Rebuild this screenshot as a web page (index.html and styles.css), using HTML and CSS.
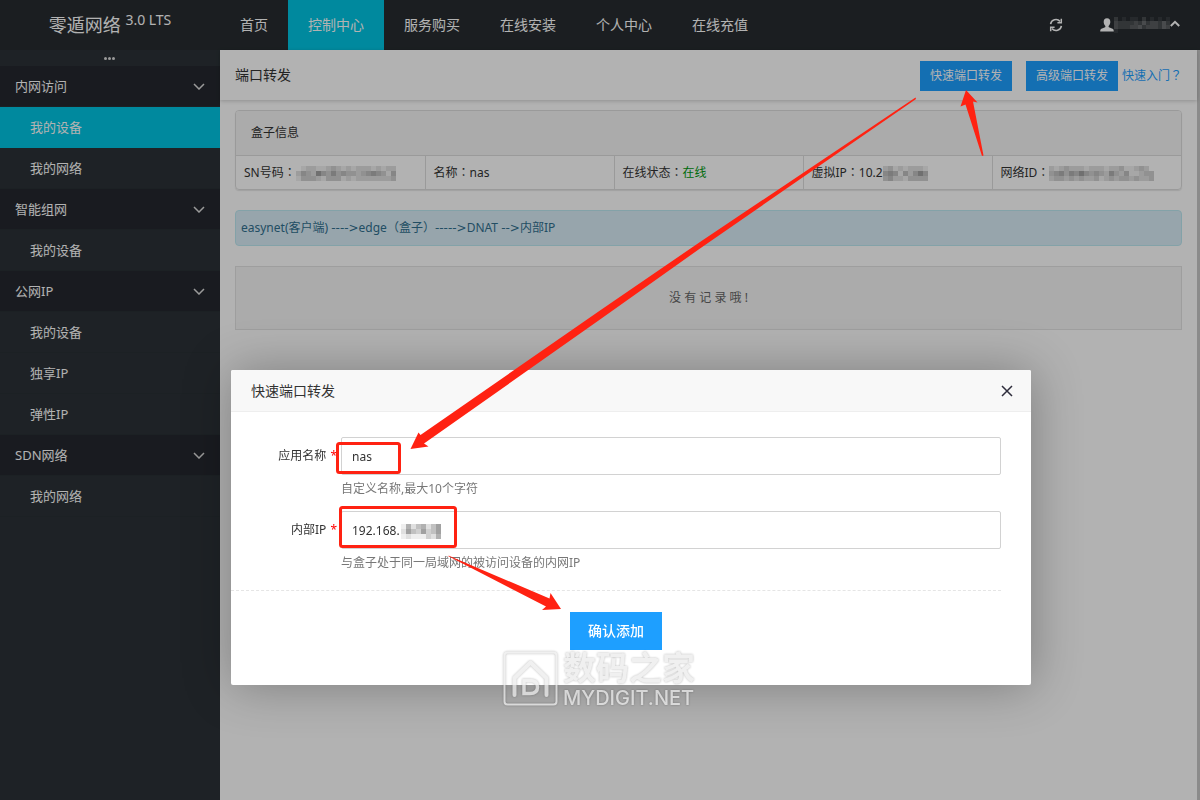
FILE: index.html
```html
<!DOCTYPE html>
<html lang="zh-CN">
<head>
<meta charset="utf-8">
<title>零遁网络</title>
<link rel="stylesheet" href="styles.css">
</head>
<body>
<div class="app">
  <header class="topbar">
    <div class="logo">零遁网络 <sup>3.0 LTS</sup></div>
    <nav class="nav">
      <a href="#">首页</a>
      <a href="#" class="active">控制中心</a>
      <a href="#">服务购买</a>
      <a href="#">在线安装</a>
      <a href="#">个人中心</a>
      <a href="#">在线充值</a>
    </nav>
    <div class="tools">
      <button class="icon-btn" aria-label="刷新">
        <svg width="14" height="14" viewBox="0 0 14 14" fill="none" stroke="currentColor" stroke-width="1.6"><path d="M1.6 6.2A5.4 5.4 0 0 1 11 3.4M12.4 7.8A5.4 5.4 0 0 1 3 10.6"/><path d="M12.3.8v4H8.4M1.7 13.2v-4h3.9" stroke-width="1.5"/></svg>
      </button>
      <button class="user" aria-label="用户菜单">
        <svg width="14" height="14" viewBox="0 0 14 14" fill="currentColor"><path d="M7 .3c2.300 0 3.400 1.600 3.300 3.700 0 1.500-.6 2.900-1.500 3.700-.3.300-.3 1.300.1 1.500l3.600 1.500c.9.400 1.300 1.100 1.300 2.800H.2c0-1.700.4-2.400 1.300-2.800l3.600-1.500c.4-.2.4-1.200.1-1.500C4.300 6.900 3.700 5.500 3.700 4 3.600 1.900 4.700.3 7 .3z"/></svg>
        <svg class="mosaic" data-rows="20101102010101|32222324233242|32223342333243|10000000000000"></svg>
        <svg width="10" height="14" viewBox="0 0 10 14" fill="none" stroke="currentColor" stroke-width="2"><path d="M.8 8 5 3.800 9.200 8"/></svg>
      </button>
    </div>
  </header>

  <div class="body">
    <aside class="sidebar">
      <button class="toggle" aria-label="折叠菜单"><i></i><i></i><i></i></button>
      <a href="#" class="group">内网访问<svg class="chev" viewBox="0 0 12 7"><path d="M1 1l5 5 5-5"/></svg></a>
      <a href="#" class="item active">我的设备</a>
      <a href="#" class="item">我的网络</a>
      <a href="#" class="group">智能组网<svg class="chev" viewBox="0 0 12 7"><path d="M1 1l5 5 5-5"/></svg></a>
      <a href="#" class="item">我的设备</a>
      <a href="#" class="group">公网IP<svg class="chev" viewBox="0 0 12 7"><path d="M1 1l5 5 5-5"/></svg></a>
      <a href="#" class="item">我的设备</a>
      <a href="#" class="item">独享IP</a>
      <a href="#" class="item">弹性IP</a>
      <a href="#" class="group">SDN网络<svg class="chev" viewBox="0 0 12 7"><path d="M1 1l5 5 5-5"/></svg></a>
      <a href="#" class="item">我的网络</a>
    </aside>

    <main class="main">
      <div class="page-head">
        <h1>端口转发</h1>
        <div class="actions">
          <button class="btn">快速端口转发</button>
          <button class="btn">高级端口转发</button>
          <a href="#">快速入门<span class="mid" lang="zh-TW">？</span></a>
        </div>
      </div>
      <div class="content">
        <section class="panel">
          <h2>盒子信息</h2>
          <table>
            <tr>
              <td>SN号码<span class="mid" lang="zh-TW">：</span><svg class="mosaic" data-rows="01221123212122212122|24326435343323454314|13332133312122222223"></svg></td>
              <td>名称<span class="mid" lang="zh-TW">：</span>nas</td>
              <td>在线状态<span class="mid" lang="zh-TW">：</span><span class="online">在线</span></td>
              <td>虚拟IP<span class="mid" lang="zh-TW">：</span>10.2<svg class="mosaic" data-rows="231212221|454142464|342213333"></svg></td>
              <td>网络ID<span class="mid" lang="zh-TW">：</span><svg class="mosaic" data-rows="212322212221223112320|345354643432532411233|233232322312323323223"></svg></td>
            </tr>
          </table>
        </section>
        <div class="alert">easynet(客户端) <span class="arrow">----&gt;</span>edge<span class="mid" lang="zh-TW">（</span>盒子<span class="mid" lang="zh-TW">）</span><span class="arrow">-----&gt;</span>DNAT <span class="arrow">--&gt;</span>内部IP</div>
        <div class="empty">没 有 记 录 哦 !</div>
      </div>
    </main>
  </div>
</div>

<div class="scrim"></div>

<section class="modal" role="dialog" aria-labelledby="dlg-title">
  <div class="modal-head">
    <h2 id="dlg-title">快速端口转发</h2>
    <button class="close" aria-label="关闭"><svg width="12" height="12" viewBox="0 0 12 12"><path d="M1 1l10 10M11 1L1 11"/></svg></button>
  </div>
  <form class="form">
    <div class="row">
      <label for="app-name">应用名称<b>*</b></label>
      <div class="field"><input id="app-name" type="text" value="nas"></div>
      <p>自定义名称,最大10个字符</p>
    </div>
    <div class="row">
      <label for="inner-ip">内部IP<b>*</b></label>
      <div class="field"><input id="inner-ip" type="text" value="192.168."><svg class="mosaic" data-rows="15245246|26436346|12111325"></svg></div>
      <p>与盒子处于同一局域网的被访问设备的内网IP</p>
    </div>
    <div class="submit"><button type="button" class="btn big">确认添加</button></div>
  </form>
</section>

<svg class="notes" width="1200" height="800" viewBox="0 0 1200 800">
  <g fill="none" stroke="#ff2212" stroke-width="3">
    <rect x="337.500" y="443.500" width="62" height="29" rx="2"/>
    <rect x="340.500" y="507.500" width="115" height="39" rx="2"/>
  </g>
  <g fill="#ff2212">
    <path d="M915.500 97.500 700 242 600 310.500 420.500 435 418.500 432.500 410.500 449 428.500 446.500 424 443.500 600 319.500 700 248.500 916 99z"/>
    <path d="M966 90 960.500 106.500 965.500 104.500 982 156 983.500 155.500 973 101.500 977.500 102.500z"/>
    <path d="M448 556 449 555.800 549.500 598.500 550.500 593 561 609 542 610 546 606.500z"/>
  </g>
  <g class="mark">
    <rect x="504.500" y="652.500" width="52" height="52" rx="3" fill="none" stroke="#ebebeb" stroke-width="2"/>
    <path d="M514.500 695v-17l16-15.500 16 15.500v17" fill="none" stroke="#ebebeb" stroke-width="4" stroke-linecap="round" stroke-linejoin="round"/>
    <path d="M524 680.500h6c5 0 7.500 2.500 7.500 6.500s-2.500 6.500-7.500 6.500h-6z" fill="none" stroke="#ebebeb" stroke-width="3.500"/>
    <text class="mark-cn" x="563" y="680">数码之家</text>
    <text class="mark-en" x="563" y="705">MYDIGIT.NET</text>
  </g>
</svg>
<script src="mosaic.js"></script>
</body>
</html>
```

FILE: styles.css
```css
* { box-sizing: border-box; }
body {
  margin: 0;
  color: #333;
  background: #fff;
  font: 12px/20px "Noto Sans", "Noto Sans CJK SC", sans-serif;
}
a { color: inherit; text-decoration: none; }
button, input { font: inherit; color: inherit; }
button { border: 0; padding: 0; background: none; cursor: pointer; }
h1, h2, p { margin: 0; font-weight: 400; }

.app { display: flex; flex-direction: column; min-height: 100vh; }

.topbar { display: flex; height: 50px; background: #272c30; color: #fff; line-height: 50px; }
.logo { width: 220px; text-align: center; font-size: 18px; }
.logo sup { font-size: 14px; line-height: 0; vertical-align: 7px; }
.nav { display: flex; font-size: 14px; }
.nav a { padding: 0 20px; }
.nav .active { background: #00c5e2; }
.tools { display: flex; align-items: center; gap: 37px; margin-left: auto; padding-right: 20px; }
.icon-btn { display: flex; }
.user { display: flex; align-items: center; }

.body { display: flex; flex: 1; }
.sidebar { display: flex; flex-direction: column; width: 220px; background: #2b3237; color: #fff; font-size: 13px; line-height: 40px; }
.toggle { display: flex; align-items: center; justify-content: center; gap: 1px; height: 16px; padding-right: 2px; }
.toggle i { width: 3px; height: 3px; border-radius: 50%; background: #ddd; }
.group, .item { border-bottom: 1px solid #293034; }
.group { display: flex; align-items: center; justify-content: space-between; padding: 0 15px; background: #24282e; }
.item { padding-left: 30px; }
.item.active { background: #00c5e2; border-color: #00c5e2; }
.chev { width: 12px; height: 7px; fill: none; stroke: #ddd; stroke-width: 1.5; }

.main { flex: 1; border-right: 3px solid #c8c8c8; }
.page-head { display: flex; align-items: center; justify-content: space-between; height: 50px; padding: 0 15px; box-shadow: 0 1px 4px rgba(0, 0, 0, .2); }
.page-head h1 { font-size: 14px; }
.actions { display: flex; align-items: center; margin-top: 2px; color: #1e9fff; }
.actions .btn { margin-right: 14px; }
.actions .btn + .btn { margin-right: 4px; }
.btn { height: 30px; padding: 0 10px; background: #1e9fff; color: #fff; }
.content { display: flex; flex-direction: column; gap: 20px; padding: 10px 15px; }
.panel { border: 1px solid #ddd; border-radius: 4px; box-shadow: 0 1px 1px rgba(0, 0, 0, .1); overflow: hidden; }
.panel h2 { padding: 12px 15px; background: #f5f5f5; border-bottom: 1px solid #ddd; font-size: 12px; }
table { width: 100%; border-collapse: collapse; table-layout: fixed; }
td { height: 33px; padding: 0 8px; white-space: nowrap; }
td + td { border-left: 1px solid #ddd; }
.mid { font-family: "Noto Sans CJK TC", sans-serif; line-height: 1; }
.arrow { font-family: "DejaVu Sans", sans-serif; line-height: 1; }
.online { color: #009a10; }
.mosaic { vertical-align: middle; }
.alert { padding: 7px 5px; border: 1px solid #bce8f1; border-radius: 4px; background: #d9edf7; color: #31708f; }
.empty { padding: 21px; border: 1px solid #e2e2e2; background: #f5f5f5; color: #666; text-align: center; }

.scrim { position: fixed; inset: 0; background: rgba(0, 0, 0, .3); }

.modal { position: absolute; top: 370px; left: 231px; width: 800px; max-width: calc(100% - 231px); border-radius: 2px; background: #fff; box-shadow: 1px 1px 50px rgba(0, 0, 0, .3); }
.modal-head { display: flex; align-items: center; justify-content: space-between; height: 42px; padding: 0 18px 0 20px; border-bottom: 1px solid #eee; border-radius: 2px 2px 0 0; background: #f8f8f8; }
.modal-head h2 { font-size: 14px; }
.close { display: flex; }
.close path { stroke: #2e2d3c; stroke-width: 1.5; }
.form { padding: 25px 30px 35px 0; }
.row { display: grid; grid-template-columns: 110px 1fr; margin-bottom: 10px; }
.row label { padding-right: 4px; line-height: 38px; text-align: right; }
.row b { margin-left: 4px; color: #f00; font-weight: 400; }
.field { position: relative; }
.field input { display: block; width: 100%; height: 38px; padding: 0 10px; border: 1px solid #d2d2d2; border-radius: 2px; background: #fff; }
.field .mosaic { position: absolute; left: 60px; top: 13px; }
.row p { grid-column: 2; padding-top: 2px; line-height: 24px; color: #777; }
.submit { padding-top: 21px; border-top: 1px dashed #e5e5e5; text-align: center; }
.row + .submit { margin-top: 15px; }
.btn.big { height: 38px; padding: 0 18px; font-size: 14px; font-weight: 500; }

.notes { position: absolute; top: 0; left: 0; pointer-events: none; }
.mark { filter: drop-shadow(0 0 1px rgba(0, 0, 0, .35)); fill: #ebebeb; opacity: .75; }
.mark-cn { font: 700 33px "Noto Sans CJK SC", sans-serif; }
.mark-en { font: 500 20px Inter, sans-serif; }
```

FILE: mosaic.js
```js
// Each digit is the strength of one block covering private text.
document.querySelectorAll('.mosaic').forEach(function (svg) {
  var rows = svg.dataset.rows.split('|');
  var size = svg.closest('.user') ? 4 : 5;
  svg.setAttribute('width', rows[0].length * size);
  svg.setAttribute('height', rows.length * size);
  rows.forEach(function (row, y) {
    row.split('').forEach(function (d, x) {
      var r = document.createElementNS('http://www.w3.org/2000/svg', 'rect');
      r.setAttribute('x', x * size);
      r.setAttribute('y', y * size);
      r.setAttribute('width', size);
      r.setAttribute('height', size);
      r.setAttribute('fill', 'currentColor');
      r.setAttribute('opacity', d / 13);
      svg.appendChild(r);
    });
  });
});
```
